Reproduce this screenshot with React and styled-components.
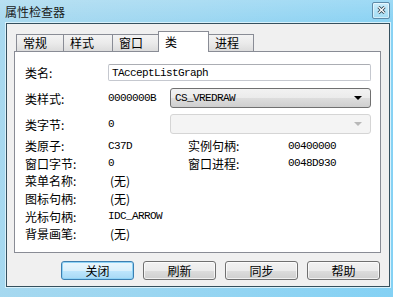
import styled, { createGlobalStyle } from "styled-components";

const Global = createGlobalStyle`
  html, body {
    margin: 0;
    padding: 0;
    background: #fff;
  }
  body {
    font-family: "Noto Sans CJK SC", "Noto Sans", sans-serif;
    font-size: 12px;
    color: #000;
  }
`;

const Frame = styled.div`
  width: 393px;
  height: 297px;
  box-sizing: border-box;
  padding: 0 3px 10px 6px;
  display: flex;
  flex-direction: column;
  background:
    linear-gradient(180deg, rgba(255, 255, 255, 0.18) 0px, rgba(255, 255, 255, 0) 24px),
    linear-gradient(100deg, #a9d9ef 0%, #9bd6f1 45%, #84d1f4 100%);
  overflow: hidden;
`;

const TitleBar = styled.div`
  height: 23px;
  display: flex;
  align-items: center;
  justify-content: space-between;
`;

const Title = styled.span`
  font-size: 12px;
  color: #1a1a1a;
  margin-top: -1px;
  margin-left: -1px;
`;

const CloseBox = styled.div`
  width: 16px;
  height: 15px;
  margin-top: -3px;
  border: 1px solid #5d8aa8;
  border-radius: 2px;
  background: linear-gradient(180deg, #c9ecfb 0%, #a3dcf4 100%);
  box-shadow: inset 0 0 0 1px rgba(255, 255, 255, 0.5);
  display: flex;
  align-items: center;
  justify-content: center;
`;

const Client = styled.div`
  flex: 1;
  background: #f0f0f0;
  border: 1px solid #35505e;
  box-shadow: 0 0 0 1px #d8f1fb;
  display: flex;
  flex-direction: column;
  padding: 7px 8px 0 7px;
`;

const TabStrip = styled.div`
  height: 20px;
  display: flex;
  align-items: flex-end;
  padding-left: 2px;
  position: relative;
  z-index: 1;
`;

const Tab = styled.div`
  box-sizing: border-box;
  width: ${(p) => p.$w}px;
  height: ${(p) => (p.$active ? 21 : 17)}px;
  margin-left: ${(p) => (p.$first ? 0 : -1)}px;
  margin-bottom: ${(p) => (p.$active ? -1 : 0)}px;
  padding-left: 6px;
  border: 1px solid #898c95;
  border-bottom: none;
  background: ${(p) =>
    p.$active ? "#ffffff" : "linear-gradient(180deg, #f3f3f3 0%, #ebebeb 50%, #dcdcdc 100%)"};
  position: relative;
  z-index: ${(p) => (p.$active ? 2 : 0)};
  font-size: 12px;
  line-height: ${(p) => (p.$active ? 19 : 16)}px;
  white-space: nowrap;
`;

const Panel = styled.div`
  box-sizing: border-box;
  height: 202px;
  width: 367px;
  background: #ffffff;
  border: 1px solid #898c95;
  padding: 12px 0 0 10px;
  display: flex;
  flex-direction: column;
`;

const Row = styled.div`
  display: flex;
  align-items: center;
  height: ${(p) => p.$h}px;
  margin-top: ${(p) => p.$mt || 0}px;
`;

const Label = styled.span`
  width: ${(p) => p.$w || 83}px;
  flex: none;
  font-size: 12px;
  white-space: nowrap;
`;

const Value = styled.span`
  width: ${(p) => (p.$w ? `${p.$w}px` : "auto")};
  flex: none;
  font-family: "Liberation Mono", "DejaVu Sans Mono", monospace;
  font-size: 11px;
  letter-spacing: -0.6px;
  white-space: nowrap;
`;

const Paren = styled.span`
  font-size: 12px;
  margin-left: 2px;
`;

const TextBox = styled.div`
  box-sizing: border-box;
  width: 263px;
  height: 17px;
  border: 1px solid #c5c8cf;
  border-top-color: #abadb3;
  border-radius: 2px;
  background: #fff;
  padding-left: 3px;
  display: flex;
  align-items: center;
  font-family: "Liberation Mono", "DejaVu Sans Mono", monospace;
  font-size: 11px;
  letter-spacing: -0.6px;
`;

const Combo = styled.div`
  box-sizing: border-box;
  width: 201px;
  height: 20px;
  border: 1px solid ${(p) => (p.$disabled ? "#d5d5d5" : "#707070")};
  border-radius: 3px;
  background: ${(p) =>
    p.$disabled ? "#f4f4f4" : "linear-gradient(180deg, #f2f2f2 0%, #ebebeb 50%, #dddddd 51%, #cfcfcf 100%)"};
  display: flex;
  align-items: center;
  justify-content: space-between;
  padding: 0 8px 0 4px;
  font-family: "Liberation Mono", "DejaVu Sans Mono", monospace;
  font-size: 11px;
  letter-spacing: -0.6px;
`;

const Arrow = styled.span`
  width: 0;
  height: 0;
  border-left: 4px solid transparent;
  border-right: 4px solid transparent;
  border-top: 4px solid ${(p) => (p.$disabled ? "#b8b8b8" : "#000")};
`;

const ButtonBar = styled.div`
  display: flex;
  justify-content: flex-end;
  gap: 9px;
  margin-top: 8px;
  padding-right: 1px;
`;

const Button = styled.button`
  box-sizing: border-box;
  width: 73px;
  height: 19px;
  padding: 0;
  font-family: "Noto Sans CJK SC", sans-serif;
  font-size: 12px;
  color: #000;
  border-radius: 3px;
  border: 1px solid ${(p) => (p.$default ? "#3c7fb1" : "#707070")};
  background: ${(p) =>
    p.$default
      ? "linear-gradient(180deg, #eaf6fd 0%, #d9f0fc 50%, #bee6fd 51%, #a7d9f5 100%)"
      : "linear-gradient(180deg, #f2f2f2 0%, #ebebeb 50%, #dddddd 51%, #cfcfcf 100%)"};
  box-shadow: ${(p) =>
    p.$default ? "inset 0 0 0 1px #8fd3f6" : "inset 0 0 0 1px rgba(255,255,255,0.7)"};
  line-height: 16px;
`;

const tabs = [
  { name: "常规", w: 48 },
  { name: "样式", w: 50 },
  { name: "窗口", w: 47 },
  { name: "类", w: 51, active: true },
  { name: "进程", w: 46 },
];

export default function App() {
  return (
    <>
      <Global />
      <Frame>
        <TitleBar>
          <Title>属性检查器</Title>
          <CloseBox>
            <svg width="9" height="8" viewBox="0 0 9 8">
              <path d="M1.5 1 L7.5 7 M7.5 1 L1.5 7" stroke="#2b3f4c" strokeWidth="3" />
              <path d="M1.5 1 L7.5 7 M7.5 1 L1.5 7" stroke="#ffffff" strokeWidth="1.4" />
            </svg>
          </CloseBox>
        </TitleBar>
        <Client>
          <TabStrip>
            {tabs.map((t, i) => (
              <Tab key={t.name} $w={t.w} $active={t.active} $first={i === 0}>
                {t.name}
              </Tab>
            ))}
          </TabStrip>
          <Panel>
            <Row $h={17}>
              <Label>类名:</Label>
              <TextBox>TAcceptListGraph</TextBox>
            </Row>
            <Row $h={20} $mt={7}>
              <Label>类样式:</Label>
              <Value $w={62}>0000000B</Value>
              <Combo>
                CS_VREDRAW
                <Arrow />
              </Combo>
            </Row>
            <Row $h={20} $mt={6}>
              <Label>类字节:</Label>
              <Value $w={62}>0</Value>
              <Combo $disabled>
                <span />
                <Arrow $disabled />
              </Combo>
            </Row>
            <Row $h={17.6} $mt={3}>
              <Label>类原子:</Label>
              <Value $w={80}>C37D</Value>
              <Label $w={100}>实例句柄:</Label>
              <Value>00400000</Value>
            </Row>
            <Row $h={17.6}>
              <Label>窗口字节:</Label>
              <Value $w={80}>0</Value>
              <Label $w={100}>窗口进程:</Label>
              <Value>0048D930</Value>
            </Row>
            <Row $h={17.6}>
              <Label>菜单名称:</Label>
              <Paren>(无)</Paren>
            </Row>
            <Row $h={17.6}>
              <Label>图标句柄:</Label>
              <Paren>(无)</Paren>
            </Row>
            <Row $h={17.6}>
              <Label>光标句柄:</Label>
              <Value>IDC_ARROW</Value>
            </Row>
            <Row $h={17.6}>
              <Label>背景画笔:</Label>
              <Paren>(无)</Paren>
            </Row>
          </Panel>
          <ButtonBar>
            <Button $default>关闭</Button>
            <Button>刷新</Button>
            <Button>同步</Button>
            <Button>帮助</Button>
          </ButtonBar>
        </Client>
      </Frame>
    </>
  );
}
